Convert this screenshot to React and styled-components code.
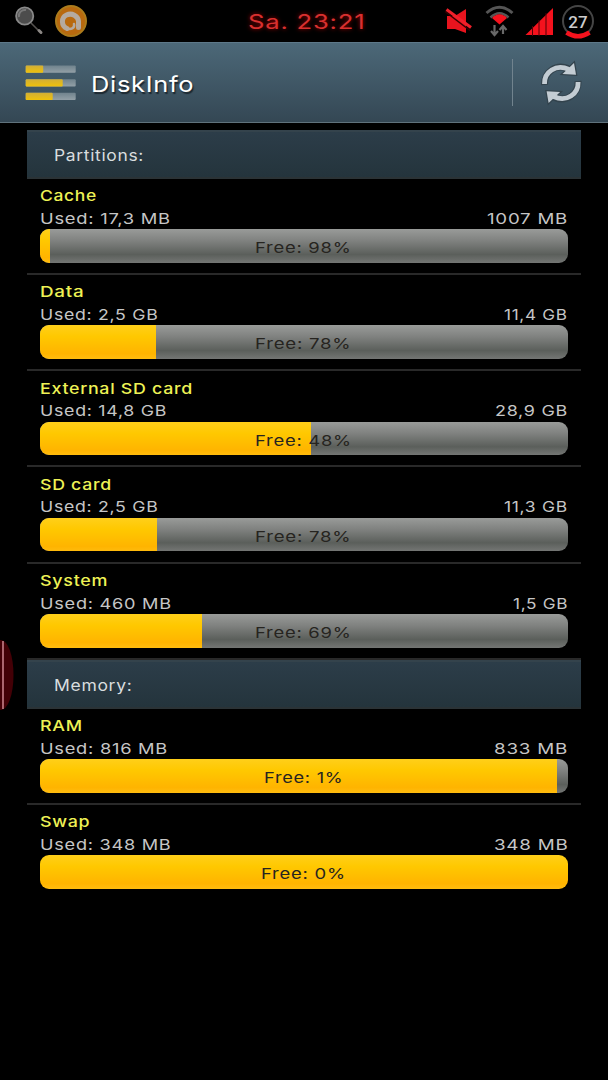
import { useLayoutEffect, useRef, useState } from 'react';
import styled, { createGlobalStyle } from 'styled-components';

const GlobalStyle = createGlobalStyle`
  body {
    margin: 0;
    background-color: #000;
    font-family: Inter, 'Liberation Sans', sans-serif;
  }
`;

const Screen = styled.div`
  position: relative;
  width: 608px;
  height: 1080px;
  overflow: hidden;
  background-color: #000;
`;

const StatusBar = styled.div`
  display: flex;
  align-items: flex-start;
  height: 42px;
`;

const Clock = styled.div`
  flex: 1;
  color: #d8302f;
  font-size: 20px;
  line-height: 45px;
  padding-left: 18px;
  text-shadow: 0 0 4px #a00;
`;

const TitleBar = styled.header`
  display: flex;
  align-items: center;
  height: 81px;
  box-sizing: border-box;
  padding-left: 25px;
  border-top: 1px solid #5d7889;
  border-bottom: 1px solid #60727c;
  background: linear-gradient(#4c6878, #344754);
`;

const Title = styled.h1`
  flex: 1;
  margin: 0 0 0 15px;
  color: #fff;
  font-size: 22px;
  font-weight: 400;
  line-height: 40px;
  padding-top: 2px;
  text-shadow: 1px 2px 1px #1b262e;
`;

const Divider = styled.div`
  width: 1px;
  height: 47px;
  margin-right: 27px;
  background-color: #71838e;
`;

const Content = styled.main`
  margin: 7px 27px 0;
`;

const SectionHeader = styled.h2`
  height: 48.8px;
  box-sizing: border-box;
  margin: 0;
  padding-left: 27px;
  border-top: 2px solid #34434c;
  border-bottom: 2px solid #2b3336;
  background: linear-gradient(#2c3d49, #24343c);
  color: #d9dddf;
  font-size: 15.5px;
  font-weight: 400;
  line-height: 48px;
`;

const Row = styled.section`
  height: 96.2px;
  box-sizing: border-box;
  padding: 5.5px 13.5px 0 13px;
  border-bottom: ${props => props.$last ? 'none' : '2px solid #292929'};
`;

const Name = styled.div`
  height: 22.5px;
  color: #eef255;
  font-size: 15px;
  font-weight: 500;
  line-height: 24px;
`;

const Sizes = styled.div`
  display: flex;
  justify-content: space-between;
  height: 22.5px;
  color: #c6c6c6;
  font-size: 15px;
  line-height: 24.5px;
`;

const Bar = styled.div`
  display: grid;
  height: 33.5px;
  border-radius: 9px;
  overflow: hidden;
  background: linear-gradient(#999b99 0%, #7f817f 35%, #5b5f5b 75%, #747674 100%);
`;

const Fill = styled.div`
  grid-area: 1 / 1;
  background: linear-gradient(#ffcf1a 0%, #ffc800 30%, #ffb400 75%, #ffc21a 100%);
`;

const FreeText = styled.div`
  grid-area: 1 / 1;
  text-align: center;
  color: #262420;
  font-size: 15px;
  line-height: 38px;
`;

const FitBox = styled.span`
  display: inline-block;
  text-align: left;
  white-space: nowrap;
`;

const FitInner = styled.span`
  display: inline-block;
  transform-origin: 0 50%;
  letter-spacing: 0.6px;
`;

const EdgeHandle = styled.svg`
  position: absolute;
  left: 0;
  top: 636px;
`;

const partitions = [
  { name: 'Cache', nameWidth: 57, used: '17,3 MB', usedWidth: 131, total: '1007 MB', totalWidth: 81, free: 98, fill: 1.9 },
  { name: 'Data', nameWidth: 44, used: '2,5 GB', usedWidth: 118, total: '11,4 GB', totalWidth: 64, free: 78, fill: 22 },
  { name: 'External SD card', nameWidth: 153, used: '14,8 GB', usedWidth: 127, total: '28,9 GB', totalWidth: 73, free: 48, fill: 51.3 },
  { name: 'SD card', nameWidth: 72, used: '2,5 GB', usedWidth: 118, total: '11,3 GB', totalWidth: 64, free: 78, fill: 22.1 },
  { name: 'System', nameWidth: 68, used: '460 MB', usedWidth: 132, total: '1,5 GB', totalWidth: 55, free: 69, fill: 30.7 },
];

const memory = [
  { name: 'RAM', nameWidth: 43, used: '816 MB', usedWidth: 128, total: '833 MB', totalWidth: 74, free: 1, freeWidth: 80, fill: 98.1 },
  { name: 'Swap', nameWidth: 50, used: '348 MB', usedWidth: 132, total: '348 MB', totalWidth: 74, free: 0, freeWidth: 85, fill: 100 },
];

const Wide = ({ width, children }) => {
  const ref = useRef(null);
  const [scale, setScale] = useState(1);

  useLayoutEffect(() => {
    setScale(width / ref.current.offsetWidth);
  }, [width]);

  return (
    <FitBox style={{ width }}>
      <FitInner ref={ref} style={{ transform: `scaleX(${scale})` }}>{children}</FitInner>
    </FitBox>
  );
};

const LeftIcons = () => (
  <svg width="230" height="42" viewBox="0 0 230 42">
    <path d="M31 23 L40 32" stroke="#55524f" strokeWidth="1.600" />
    <path d="M39 30.500 L41 32.500" stroke="#8b8784" strokeWidth="3" strokeLinecap="round" />
    <circle cx="24.700" cy="16" r="8.600" fill="#4c4c4c" stroke="#898989" strokeWidth="1.800" />
    <path d="M19 17 a6 6 0 0 1 7 -7" fill="none" stroke="#777" strokeWidth="2" />
    <circle cx="71" cy="21" r="15" fill="#b8690f" stroke="#ac7c1c" strokeWidth="2" />
    <path
      d="M67 28.500 C61 26 61 17.500 66.500 15 C72 12.500 78 16 78.500 21 V27.500"
      fill="none"
      stroke="#b5aaa0"
      strokeWidth="5"
      strokeLinecap="round"
    />
    <path d="M66 28 C71 30.500 75 28 74 24" fill="none" stroke="#b5aaa0" strokeWidth="2.500" strokeLinecap="round" />
  </svg>
);

const RightIcons = () => (
  <svg width="168" height="42" viewBox="440 0 168 42">
    <path d="M447 16 H455 L466 9 V33 L455 29 H447 Z" fill="#e8141e" />
    <path d="M445 11.500 L470 30.500" stroke="#300" strokeWidth="1.500" />
    <path d="M446.500 9.500 L471 27.500" stroke="#f0202a" strokeWidth="3" />
    <path d="M486.500 13 Q499.500 1.500 512.500 13" fill="none" stroke="#555" strokeWidth="3" />
    <path d="M490.500 17.500 Q499.500 9 508.500 17.500" fill="none" stroke="#555" strokeWidth="2.500" />
    <path d="M492 18 Q499.500 10.500 507 18 L499.500 24.500 Z" fill="#f5121d" />
    <path d="M494.500 25 V34 M491 31 L494.500 35 L498 31 M503 34 V27 M499.500 30 L503 26 L506.500 30" fill="none" stroke="#686868" strokeWidth="2.200" />
    <path d="M525.500 35 L553 8 V35 Z" fill="#f5121d" />
    <path d="M532.500 26 V36 M539 20 V36 M546 13 V36" stroke="#500007" strokeWidth="1" />
    <circle cx="578" cy="21" r="15" fill="none" stroke="#454545" strokeWidth="2" />
    <path d="M566.500 32.500 Q578 40 589.500 32.500" fill="none" stroke="#f5121d" strokeWidth="4.500" />
    <text x="578" y="28" textAnchor="middle" fontFamily="Roboto, sans-serif" fontWeight="500" fontSize="17" fill="#ccc">27</text>
  </svg>
);

const AppIcon = () => (
  <svg width="51" height="36" viewBox="0 0 51 36">
    <defs>
      <linearGradient id="iconGrey" x2="0" y2="1">
        <stop stopColor="#70838d" />
        <stop offset="1" stopColor="#93a0a7" />
      </linearGradient>
      <linearGradient id="iconGold" x2="0" y2="1">
        <stop stopColor="#d0ae38" />
        <stop offset="1" stopColor="#efc10a" />
      </linearGradient>
    </defs>
    {[[0.500, 17.500], [14.200, 37], [27.700, 27]].map(([y, width]) => (
      <g key={y}>
        <rect x="0.700" y={y} width="50" height="7.300" rx="1" fill="url(#iconGrey)" />
        <rect x="0.700" y={y} width={width} height="7.300" rx="1" fill="url(#iconGold)" />
      </g>
    ))}
  </svg>
);

const RefreshIcon = () => (
  <svg width="68" height="48" viewBox="0 0 68 48">
    {[0, 180].map(angle => (
      <g key={angle} transform={`rotate(${angle} 21.300 24)`} fill="none">
        <path d="M4.500 26 C4 13 16 4.500 28 9.500" stroke="#33434d" strokeWidth="7" />
        <path d="M34 4 L36 15.700 L22.500 15 Z" fill="#33434d" stroke="#33434d" strokeWidth="2.500" />
        <path d="M4.500 25 C4 13 16 4.500 29 10.500" stroke="#c3ccd3" strokeWidth="4.800" />
        <path d="M34 4 L36 15.700 L22.500 15 Z" fill="#c3ccd3" />
      </g>
    ))}
  </svg>
);

const DiskRow = ({ item, last }) => (
  <Row $last={last}>
    <Name><Wide width={item.nameWidth}>{item.name}</Wide></Name>
    <Sizes>
      <Wide width={item.usedWidth}>Used: {item.used}</Wide>
      <Wide width={item.totalWidth}>{item.total}</Wide>
    </Sizes>
    <Bar>
      <Fill style={{ width: `${item.fill}%` }} />
      <FreeText><Wide width={item.freeWidth || 97}>Free: {item.free}%</Wide></FreeText>
    </Bar>
  </Row>
);

const App = () => {
  return (
    <Screen>
      <GlobalStyle />
      <StatusBar>
        <LeftIcons />
        <Clock><Wide width={118}>Sa. 23:21</Wide></Clock>
        <RightIcons />
      </StatusBar>
      <TitleBar>
        <AppIcon />
        <Title><Wide width={103}>DiskInfo</Wide></Title>
        <Divider />
        <RefreshIcon />
      </TitleBar>
      <Content>
        <SectionHeader><Wide width={90}>Partitions:</Wide></SectionHeader>
        {partitions.map(item => <DiskRow key={item.name} item={item} />)}
        <SectionHeader><Wide width={78}>Memory:</Wide></SectionHeader>
        {memory.map((item, index) => (
          <DiskRow key={item.name} item={item} last={index === memory.length - 1} />
        ))}
      </Content>
      <EdgeHandle width="14" height="78" viewBox="0 0 14 78">
        <ellipse cx="1" cy="39" rx="12.500" ry="35" fill="#430006" />
        <path d="M3 5 V73" stroke="#c77f89" strokeWidth="1.600" />
      </EdgeHandle>
    </Screen>
  );
};

export default App;
